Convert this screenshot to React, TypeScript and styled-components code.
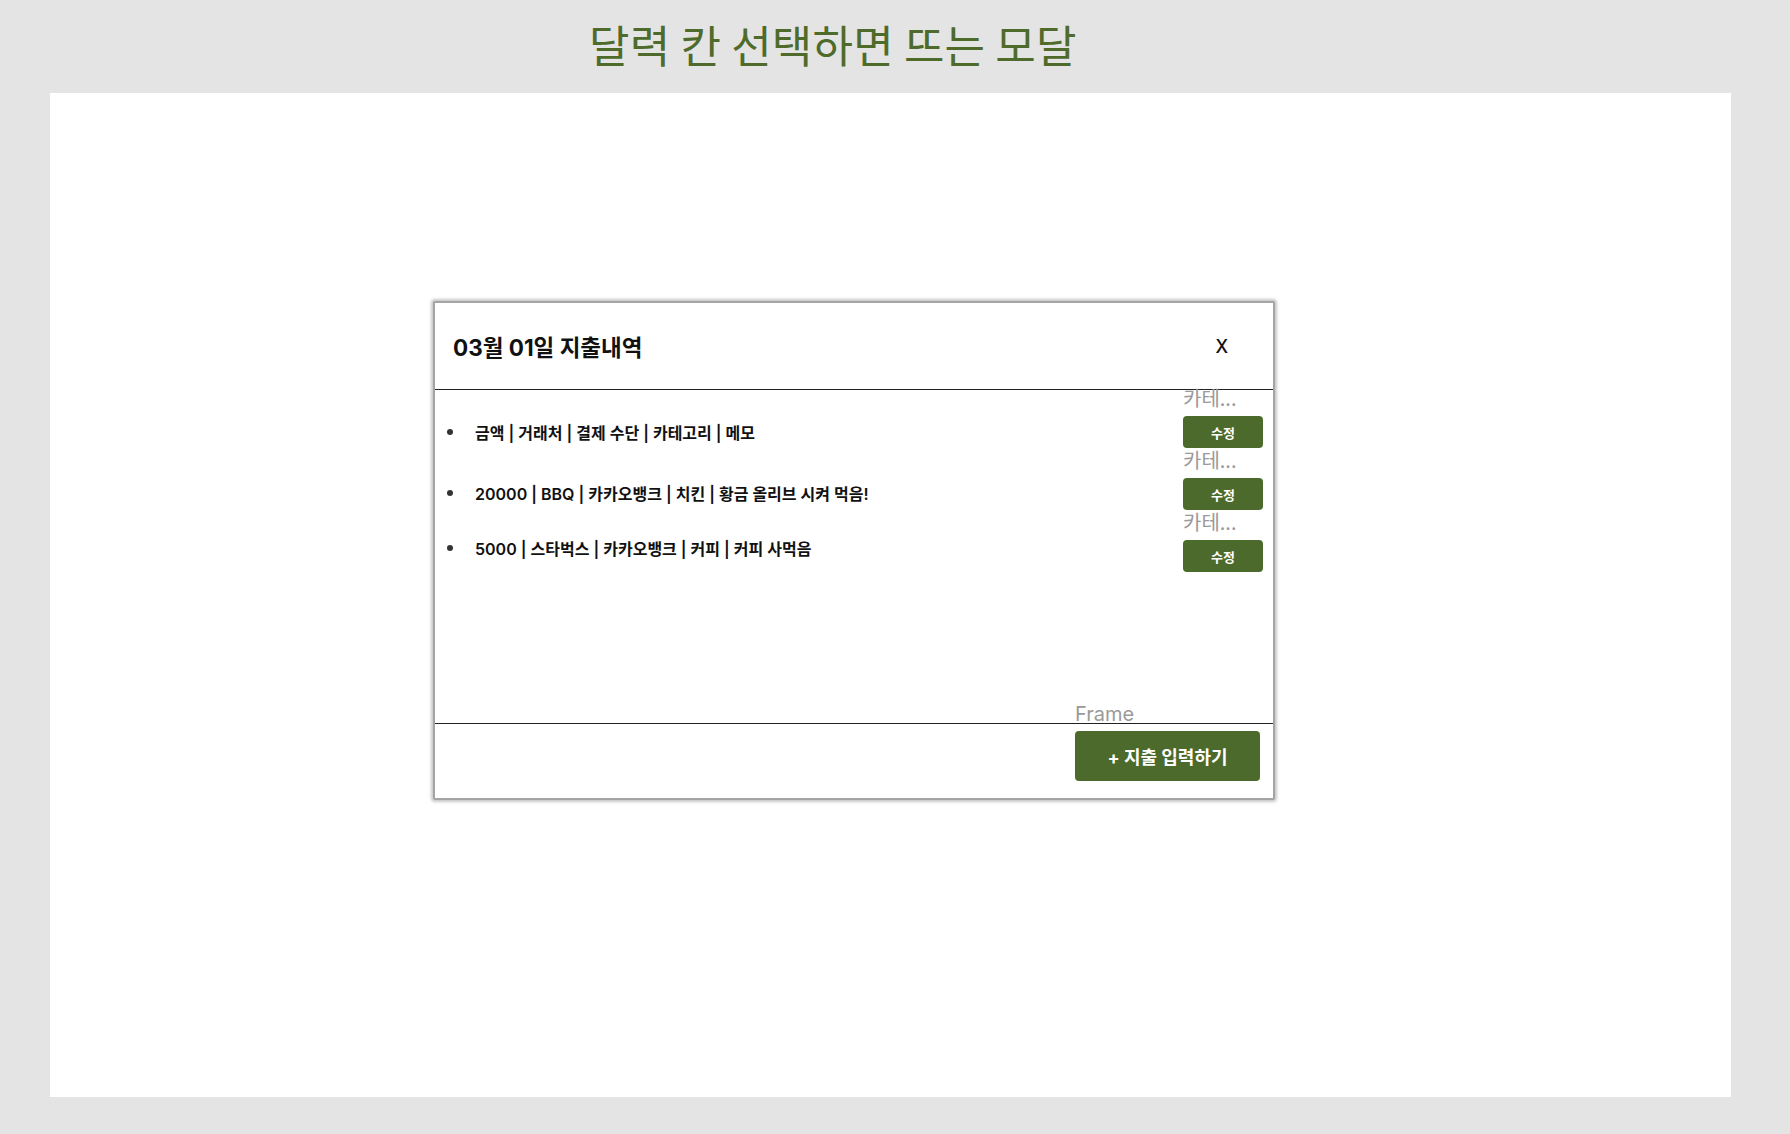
import styled, { createGlobalStyle } from 'styled-components';

const GlobalStyle = createGlobalStyle`
  html, body {
    margin: 0;
    padding: 0;
    background-color: #e4e4e4;
  }

  body {
    font-family: Inter, "Noto Sans CJK KR", sans-serif;
    color: #111111;
  }
`;

const Page = styled.div`
  width: 1790px;
  height: 1134px;
  padding-left: 50px;
  box-sizing: border-box;
`;

const PageTitle = styled.h1`
  margin: 0;
  height: 93px;
  padding: 0 0 6px 539px;
  box-sizing: border-box;
  display: flex;
  align-items: center;
  font-family: "Noto Sans CJK KR", sans-serif;
  font-size: 44px;
  font-weight: 400;
  color: #4f6b2b;
  letter-spacing: 0.2px;
`;

const Canvas = styled.div`
  width: 1681px;
  height: 1004px;
  background-color: #ffffff;
  padding: 208px 0 0 383px;
  box-sizing: border-box;
`;

const Modal = styled.div`
  width: 842px;
  height: 499px;
  box-sizing: border-box;
  border: 2px solid #a4a4a4;
  border-radius: 2px;
  box-shadow: 0 0 3px 2px rgba(0, 0, 0, 0.22);
  background-color: #ffffff;
  display: flex;
  flex-direction: column;
`;

const ModalHeader = styled.div`
  height: 86px;
  display: flex;
  align-items: center;
  justify-content: space-between;
  padding: 0 45px 0 18px;
  border-bottom: 1px solid #222222;
`;

const ModalTitle = styled.h2`
  margin: 0;
  font-size: 22.5px;
  font-weight: 700;
  color: #111111;
`;

const CloseButton = styled.button`
  background: none;
  border: none;
  padding: 0;
  font-family: Inter, sans-serif;
  font-size: 18px;
  font-weight: 500;
  color: #111111;
  cursor: pointer;
`;

const ModalBody = styled.div`
  flex: 1;
  display: flex;
  padding-right: 10px;
`;

const ExpenseList = styled.ul`
  flex: 1;
  margin: 0;
  padding: 0 0 0 12px;
  list-style: none;
`;

const ExpenseItem = styled.li<{ $top: number }>`
  display: flex;
  align-items: center;
  gap: 22px;
  height: 24px;
  margin-top: ${({ $top }) => $top}px;
  font-size: 16px;
  font-weight: 600;
  color: #111111;
`;

const Dot = styled.span`
  width: 6px;
  height: 6px;
  border-radius: 50%;
  background-color: #333333;
`;

const ActionColumn = styled.div`
  width: 80px;
  margin-top: -2px;
  display: flex;
  flex-direction: column;
  gap: 2px;
`;

const ActionGroup = styled.div`
  display: flex;
  flex-direction: column;
  gap: 8px;
`;

const LayerLabel = styled.span`
  font-family: "Noto Sans CJK KR", sans-serif;
  font-size: 20px;
  line-height: 20px;
  color: #9a9a9a;
  white-space: nowrap;
`;

const EditButton = styled.button`
  width: 80px;
  height: 32px;
  border: none;
  border-radius: 4px;
  background-color: #4b6a2b;
  color: #ffffff;
  font-family: "Noto Sans CJK KR", sans-serif;
  font-size: 13px;
  font-weight: 700;
  cursor: pointer;
`;

const ModalFooter = styled.div`
  height: 74px;
  display: flex;
  justify-content: flex-end;
  padding-right: 13px;
  border-top: 1px solid #222222;
`;

const FooterAction = styled.div`
  margin-top: -21px;
  display: flex;
  flex-direction: column;
  gap: 6px;
`;

const FrameLabel = styled.span`
  font-family: Inter, sans-serif;
  font-size: 20px;
  line-height: 22px;
  color: #9a9a9a;
`;

const AddButton = styled.button`
  width: 185px;
  height: 50px;
  border: none;
  border-radius: 4px;
  background-color: #4b6a2b;
  color: #ffffff;
  font-family: Inter, "Noto Sans CJK KR", sans-serif;
  font-size: 18px;
  font-weight: 700;
  cursor: pointer;
`;

const expenses = [
  { text: '금액 | 거래처 | 결제 수단 | 카테고리 | 메모', top: 30 },
  { text: '20000 | BBQ | 카카오뱅크 | 치킨 | 황금 올리브 시켜 먹음!', top: 37 },
  { text: '5000 | 스타벅스 | 카카오뱅크 | 커피 | 커피 사먹음', top: 31 },
];

const App = () => {
  return (
    <>
      <GlobalStyle />
      <Page>
        <PageTitle>달력 칸 선택하면 뜨는 모달</PageTitle>
        <Canvas>
          <Modal>
            <ModalHeader>
              <ModalTitle>03월 01일 지출내역</ModalTitle>
              <CloseButton aria-label="닫기">X</CloseButton>
            </ModalHeader>
            <ModalBody>
              <ExpenseList>
                {expenses.map((item) => (
                  <ExpenseItem key={item.text} $top={item.top}>
                    <Dot />
                    {item.text}
                  </ExpenseItem>
                ))}
              </ExpenseList>
              <ActionColumn>
                {expenses.map((item) => (
                  <ActionGroup key={item.text}>
                    <LayerLabel>카테...</LayerLabel>
                    <EditButton>수정</EditButton>
                  </ActionGroup>
                ))}
              </ActionColumn>
            </ModalBody>
            <ModalFooter>
              <FooterAction>
                <FrameLabel>Frame</FrameLabel>
                <AddButton>+ 지출 입력하기</AddButton>
              </FooterAction>
            </ModalFooter>
          </Modal>
        </Canvas>
      </Page>
    </>
  );
};

export default App;
